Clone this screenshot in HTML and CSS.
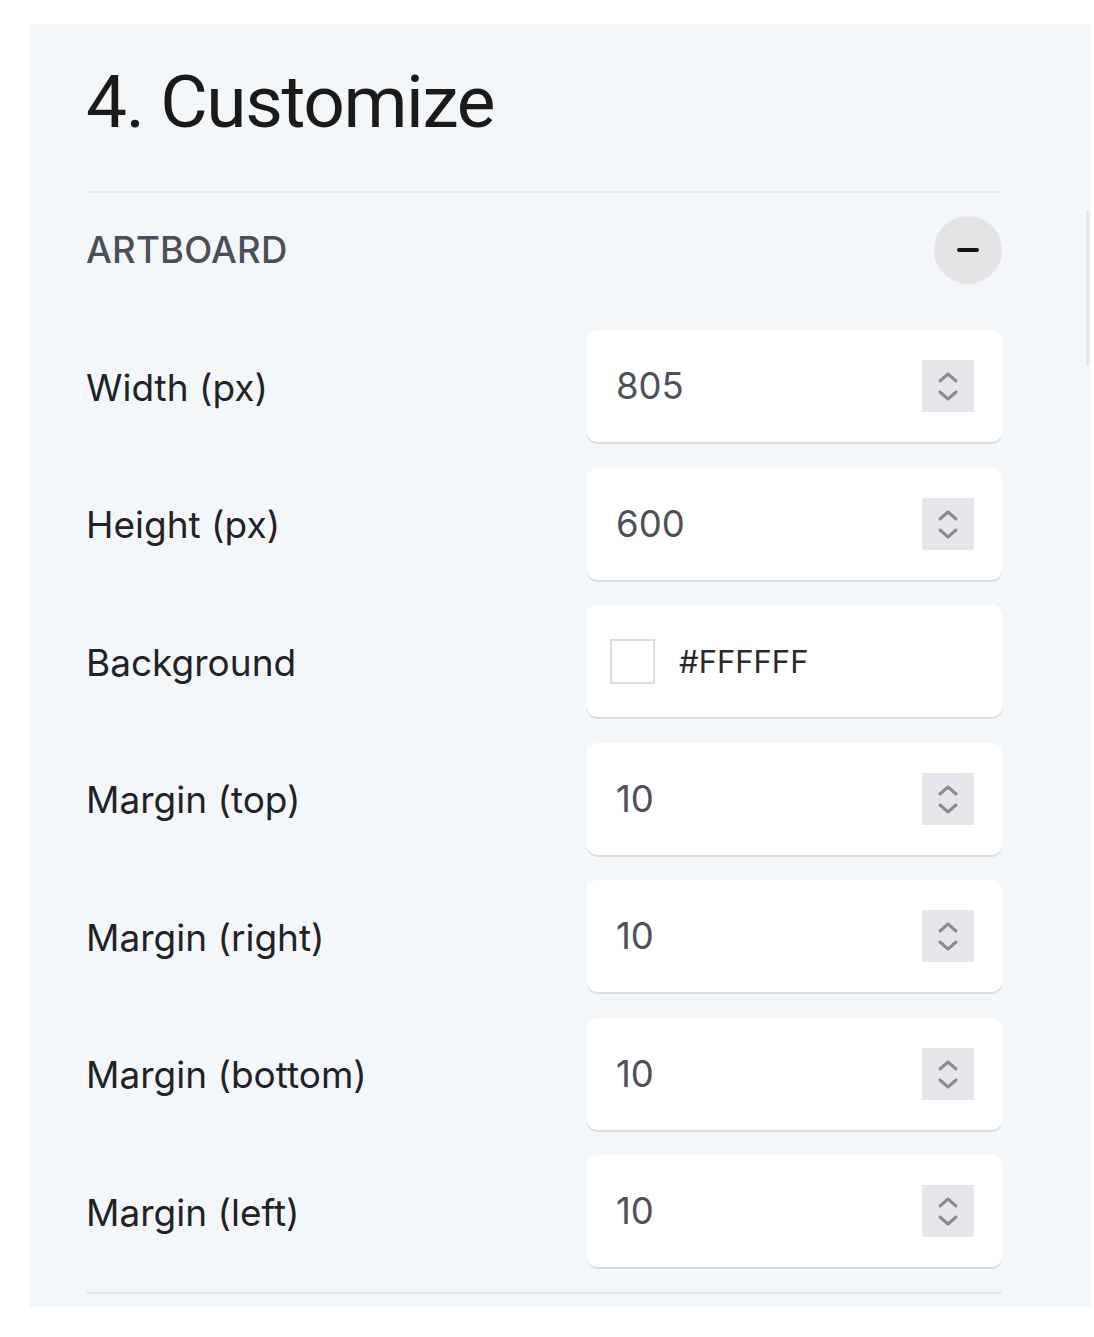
FILE: index.html
```html
<!DOCTYPE html>
<html>
<head>
<meta charset="utf-8">
<link rel="stylesheet" href="styles.css">
</head>
<body>
<div class="panel">
  <h1 class="title">4. Customize</h1>
  <div class="section">
    <div class="section-head">
      <span class="section-name">ARTBOARD</span>
      <button class="toggle" aria-label="collapse"><span class="minus"></span></button>
    </div>
    <div class="rows">
      <div class="row">
        <span class="label">Width (px)</span>
        <div class="field"><span class="value">805</span><span class="spin"><svg viewBox="0 0 52 52" width="52" height="52"><path d="M18 21 L26 14 L34 21" /><path d="M18 32 L26 39 L34 32" /></svg></span></div>
      </div>
      <div class="row">
        <span class="label">Height (px)</span>
        <div class="field"><span class="value">600</span><span class="spin"><svg viewBox="0 0 52 52" width="52" height="52"><path d="M18 21 L26 14 L34 21" /><path d="M18 32 L26 39 L34 32" /></svg></span></div>
      </div>
      <div class="row">
        <span class="label">Background</span>
        <div class="field color"><span class="swatch"></span><span class="hex">#FFFFFF</span></div>
      </div>
      <div class="row">
        <span class="label">Margin (top)</span>
        <div class="field"><span class="value">10</span><span class="spin"><svg viewBox="0 0 52 52" width="52" height="52"><path d="M18 21 L26 14 L34 21" /><path d="M18 32 L26 39 L34 32" /></svg></span></div>
      </div>
      <div class="row">
        <span class="label">Margin (right)</span>
        <div class="field"><span class="value">10</span><span class="spin"><svg viewBox="0 0 52 52" width="52" height="52"><path d="M18 21 L26 14 L34 21" /><path d="M18 32 L26 39 L34 32" /></svg></span></div>
      </div>
      <div class="row">
        <span class="label">Margin (bottom)</span>
        <div class="field"><span class="value">10</span><span class="spin"><svg viewBox="0 0 52 52" width="52" height="52"><path d="M18 21 L26 14 L34 21" /><path d="M18 32 L26 39 L34 32" /></svg></span></div>
      </div>
      <div class="row">
        <span class="label">Margin (left)</span>
        <div class="field"><span class="value">10</span><span class="spin"><svg viewBox="0 0 52 52" width="52" height="52"><path d="M18 21 L26 14 L34 21" /><path d="M18 32 L26 39 L34 32" /></svg></span></div>
      </div>
    </div>
  </div>
  <div class="scrollbar"></div>
</div>
</body>
</html>
```

FILE: styles.css
```css
html, body {
  margin: 0;
  padding: 0;
  background: #ffffff;
}
body {
  font-family: Inter, "Noto Sans", sans-serif;
}
.panel {
  position: relative;
  margin: 24px 0 0 30px;
  width: 1061px;
  height: 1283px;
  background: #f4f7fa;
  box-sizing: border-box;
  padding: 0 89px 0 56px;
}
.title {
  margin: 0;
  height: 169px;
  box-sizing: border-box;
  padding-top: 36px;
  font-family: Roboto, Inter, sans-serif;
  font-size: 73px;
  font-weight: 400;
  line-height: 84px;
  letter-spacing: -1.4px;
  color: #1a1a1a;
  border-bottom: 2px solid #e6e9ec;
}
.section {
  border-bottom: 2px solid #e6e9ec;
  padding-bottom: 25px;
}
.section-head {
  display: flex;
  align-items: center;
  justify-content: space-between;
  padding-top: 23px;
  height: 68px;
  margin-bottom: 46px;
}
.section-name {
  font-size: 36.5px;
  font-weight: 500;
  color: #4a4f57;
  letter-spacing: 0.2px;
}
.toggle {
  width: 68px;
  height: 68px;
  border-radius: 50%;
  border: none;
  background: #e4e3e5;
  padding: 0;
  display: flex;
  align-items: center;
  justify-content: center;
}
.minus {
  display: block;
  width: 22px;
  height: 4px;
  border-radius: 2px;
  background: #111;
}
.rows {
  display: flex;
  flex-direction: column;
  gap: 25.5px;
}
.row {
  display: flex;
  align-items: center;
  justify-content: space-between;
  height: 112px;
}
.label {
  font-size: 37px;
  color: #1f2328;
  padding-top: 2px;
}
.field {
  width: 415px;
  height: 112px;
  box-sizing: border-box;
  background: #fff;
  border-radius: 10px;
  box-shadow: 0 2px 0 #dcdde0;
  display: flex;
  align-items: center;
  justify-content: space-between;
  padding: 0 28px 0 29px;
}
.value {
  font-size: 36.5px;
  color: #4d5159;
}
.spin {
  width: 52px;
  height: 52px;
  background: #e6e6ea;
  display: block;
}
.spin svg {
  display: block;
}
.spin path {
  fill: none;
  stroke: #8b8b98;
  stroke-width: 3;
  stroke-linecap: round;
  stroke-linejoin: round;
}
.field.color {
  justify-content: flex-start;
  padding-left: 23px;
}
.swatch {
  width: 45px;
  height: 45px;
  box-sizing: border-box;
  border: 2px solid #dcdcdc;
  background: #fff;
  margin-right: 24px;
}
.hex {
  font-size: 31px;
  color: #2a2a2a;
}
.scrollbar {
  position: absolute;
  right: 2px;
  top: 186px;
  width: 3px;
  height: 156px;
  background: #e3e5e8;
  border-radius: 2px;
}
```
